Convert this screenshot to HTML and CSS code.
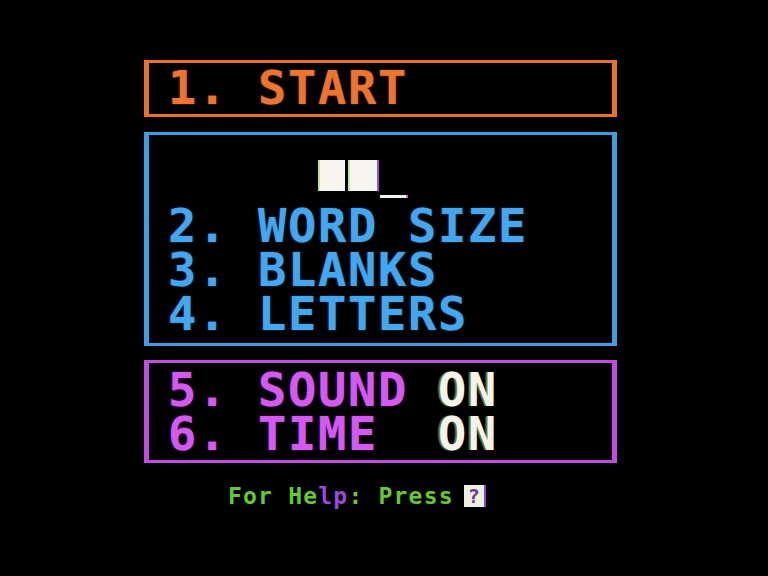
FILE: index.html
```html
<!DOCTYPE html>
<html>
<head>
<meta charset="utf-8">
<link rel="stylesheet" href="styles.css">
</head>
<body>
<div class="screen">
  <div class="box box-orange">
    <div class="line">1. START</div>
  </div>
  <div class="box box-blue">
    <div class="cursor-row">
      <span class="block"></span>
      <span class="block block-wide"></span>
      <span class="underscore"></span>
    </div>
    <div class="line">2. WORD SIZE</div>
    <div class="line">3. BLANKS</div>
    <div class="line">4. LETTERS</div>
  </div>
  <div class="box box-purple">
    <div class="line">5. SOUND <span class="on">ON</span></div>
    <div class="line">6. TIME  <span class="on">ON</span></div>
  </div>
  <div class="help">
    <span class="help-text">For He<span class="fringe">lp</span>: Press</span>
    <span class="key">?</span>
  </div>
</div>
</body>
</html>
```
FILE: styles.css
```css
html, body {
  margin: 0;
  padding: 0;
  background: #000;
}
body {
  width: 768px;
  height: 576px;
  overflow: hidden;
  font-family: "DejaVu Sans Mono", "Liberation Mono", monospace;
}
.screen {
  padding-top: 60px;
  padding-left: 144px;
  width: 473px;
}
.box {
  box-sizing: border-box;
  width: 473px;
  border-style: solid;
  border-width: 3px 5px;
}
.line {
  font-size: 47px;
  font-weight: bold;
  line-height: 44px;
  height: 44px;
  letter-spacing: 1.7px;
  white-space: pre;
}
.box-orange {
  border-color: #e6722c;
  color: #ea7430;
  padding: 3px 0 4px 19px;
  text-shadow: 0 0 2px rgba(234, 116, 48, 0.6);
}
.box-blue {
  margin-top: 15px;
  border-color: #3e9ee4;
  color: #44a6ee;
  padding: 0 0 7px 19px;
  text-shadow: 0 0 2px rgba(68, 166, 238, 0.6);
}
.cursor-row {
  box-sizing: border-box;
  height: 69px;
  padding-top: 25px;
  padding-left: 152px;
  display: flex;
  align-items: flex-start;
}
.block {
  width: 25px;
  height: 31px;
  background: #f6f6ee;
  box-shadow: -2px 0 0 #b8e88a;
}
.block-wide {
  width: 27px;
  margin-left: 5px;
  box-shadow: -2px 0 0 #c8ec9c, 2px 0 0 #9c52d8;
}
.underscore {
  width: 26px;
  height: 3px;
  margin-top: 35px;
  margin-left: 3px;
  background: #f2f0f4;
  box-shadow: 2px 0 0 #b070e0;
}
.box-purple {
  margin-top: 14px;
  border-color: #c24ce2;
  color: #d458f2;
  padding: 5px 0 4px 19px;
  text-shadow: 0 0 2px rgba(212, 88, 242, 0.6);
}
.on {
  color: #f4f4ec;
  text-shadow: -2px 0 1px rgba(170, 230, 120, 0.55);
}
.help {
  margin-top: 21px;
  padding-left: 84px;
  display: flex;
  align-items: flex-start;
  font-size: 23px;
  font-weight: bold;
  line-height: 24px;
  color: #66c832;
  letter-spacing: 1.2px;
  white-space: pre;
}
.fringe {
  color: #9c48dc;
}
.key {
  box-sizing: border-box;
  width: 20px;
  height: 22px;
  margin-top: 1px;
  margin-left: 10px;
  background: #eef0e0;
  color: #6a3aa8;
  font-size: 20px;
  line-height: 22px;
  letter-spacing: 0;
  text-align: center;
  box-shadow: 2px 0 0 #8a40d0;
}
```
